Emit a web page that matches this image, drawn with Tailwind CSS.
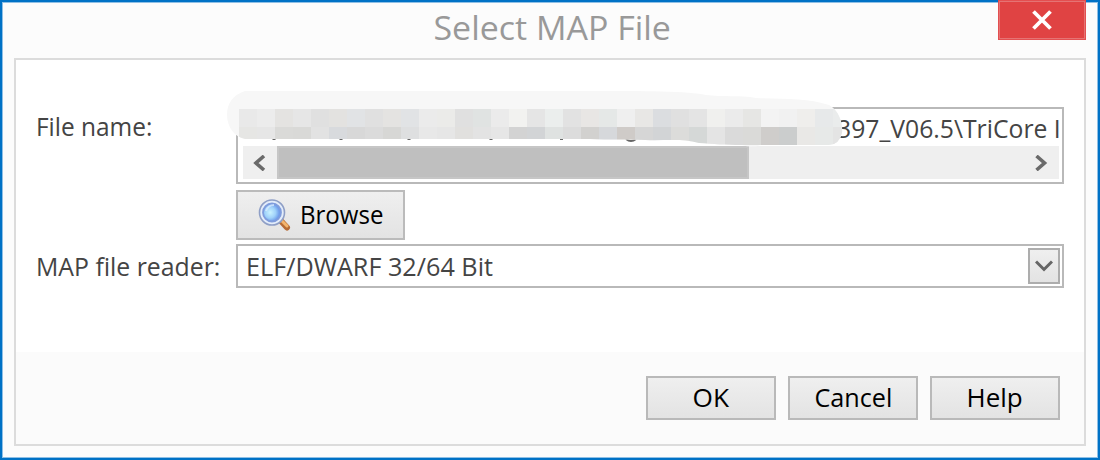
<!DOCTYPE html>
<html lang="en">
<head>
<meta charset="utf-8">
<title>Select MAP File</title>
<script src="https://cdn.jsdelivr.net/npm/@tailwindcss/browser@4"></script>
</head>
<body class="w-[1100px] h-[460px] overflow-hidden bg-[#fcfcfc] font-['Open_Sans','Noto_Sans',sans-serif] text-[25.5px] text-[#444]">
<div class="relative w-full h-full border-2 border-[#0072c6] shadow-[inset_0_0_0_1px_#8fc0e6] px-3 flex flex-col">
  <header class="h-14 pl-1 flex justify-center items-start text-[33.5px] leading-[50px] text-[#999]">
    <span class="fit inline-block whitespace-nowrap origin-center" data-w="237">Select MAP File</span>
  </header>
  <button aria-label="Close" class="absolute -top-0.5 left-[996px] w-[88px] h-10 bg-[#e04343] border border-[#e34f50] shadow-[inset_0_0_0_1px_#e57373] flex items-center justify-center">
    <svg width="20" height="20" viewBox="0 0 20 20" fill="none" stroke="#fff" stroke-width="3.8"><path d="M1.500 1.500 18.500 18.500M18.500 1.500 1.500 18.500"/></svg>
  </button>
  <main class="h-[388px] w-[1072px] border-2 border-[#dcdcdc] bg-white flex flex-col">
    <section class="h-[292px] pt-[47px] pl-5 flex flex-col">
      <div class="flex h-[77px]">
        <label class="w-[200px] leading-[39px]"><span class="fit inline-block whitespace-nowrap origin-left" data-w="116">File name:</span></label>
        <div class="relative w-[828px] border-2 border-[#b9b9b9] bg-white px-[5px] flex flex-col">
          <div class="h-[37px] w-[816px] overflow-hidden pl-[594px] leading-[39px]">
            <span class="fit inline-block whitespace-nowrap origin-left" data-w="224">397_V06.5\TriCore I</span>
          </div>
          <div class="w-[816px] h-[33px] bg-[#efefef] flex items-center">
            <div class="w-[34px] flex justify-center"><svg width="14" height="16" viewBox="0 0 14 16" fill="none" stroke="#6a6a6a" stroke-width="3.6"><path d="M11 1 3 8l8 7"/></svg></div>
            <div class="w-[472px] h-[33px] bg-[#bfbfbf] border-2 border-[#c6c6c6]"></div>
            <div class="grow flex justify-end pr-[11px]"><svg width="14" height="16" viewBox="0 0 14 16" fill="none" stroke="#6a6a6a" stroke-width="3.6"><path d="M2.5 1l8 7-8 7"/></svg></div>
          </div>
          <svg class="absolute -left-[11px] -top-[18px]" width="618" height="60" viewBox="227 91 618 60">
            <defs><clipPath id="blob"><path d="M245 91H595C640 91 690 91 706 95C722 97 740 95 756 98C785 99 808 98 829 105C840 111 843 125 842 133Q839 145 829 145H761Q752 148 742 145C725 145 713 144 699 143C681 138 665 141 645 140C622 139 610 140 590 139H245C234 137 227 126 227 115Q227 97 245 91Z"/></clipPath></defs>
            <path d="M272.500 139h3M339.500 139h3M407.500 139h3M489.500 139h3M560 139h3" stroke="#666" stroke-width="1.800"/>
            <path d="M626 139q5 4 10 0" stroke="#666" stroke-width="2" fill="none"/>
            <g clip-path="url(#blob)"><rect x="227" y="91" width="618" height="60" fill="#f7f7f7"/><g id="cells" shape-rendering="crispEdges"></g></g>
          </svg>
        </div>
      </div>
      <button class="mt-1.5 ml-[200px] w-[169px] h-[50px] border-2 border-[#bbb] bg-linear-to-b from-[#efefef] to-[#e3e3e3] text-black flex items-center pl-5">
        <svg class="shrink-0" width="33" height="34" viewBox="0 0 33 34">
          <defs><radialGradient id="lens" cx=".4" cy=".5"><stop offset="0" stop-color="#c9f2ff"/><stop offset=".6" stop-color="#a0d2fa"/><stop offset="1" stop-color="#719eea"/></radialGradient></defs>
          <path d="M23 23 29 29.500" stroke="#b66b35" stroke-width="6" stroke-linecap="round"/>
          <path d="M23 22 29 28" stroke="#f3b46c" stroke-width="3" stroke-linecap="round"/>
          <circle cx="14" cy="14.500" r="12.500" fill="#e4edfa" stroke="#8f9fc6" stroke-width="1.600"/>
          <circle cx="14" cy="14.500" r="9" fill="url(#lens)" stroke="#7f9cdc" stroke-width="1.800"/>
          <path d="M8 13q2-6 8-6" stroke="#dff0ff" stroke-width="2" fill="none" opacity=".7"/>
        </svg>
        <span class="fit ml-[9px] pb-0.5 inline-block whitespace-nowrap origin-left" data-w="83">Browse</span>
      </button>
      <div class="mt-1 flex h-11">
        <label class="w-[200px] leading-[44px]"><span class="fit inline-block whitespace-nowrap origin-left" data-w="184">MAP file reader:</span></label>
        <div class="w-[828px] border-2 border-[#b9b9b9] bg-white pl-2 pr-0.5 flex items-center justify-between">
          <span class="fit inline-block whitespace-nowrap origin-left" data-w="247">ELF/DWARF 32/64 Bit</span>
          <div class="w-8 h-9 border-2 border-[#adadad] bg-linear-to-b from-[#efefef] to-[#e3e3e3] flex items-center justify-center">
            <svg width="18" height="12" viewBox="0 0 18 12" fill="none" stroke="#666" stroke-width="3"><path d="M1 1.500 9 9.500l8-8"/></svg>
          </div>
        </div>
      </div>
    </section>
    <footer class="grow bg-[#fbfbfb] pt-6 pr-6 flex justify-end items-start gap-3 text-black">
      <button class="w-[130px] h-11 border-2 border-[#b9b9b9] bg-linear-to-b from-[#efefef] to-[#e3e3e3] flex items-center justify-center"><span class="fit pb-0.5 inline-block origin-center" data-w="36">OK</span></button>
      <button class="w-[130px] h-11 border-2 border-[#b9b9b9] bg-linear-to-b from-[#efefef] to-[#e3e3e3] flex items-center justify-center"><span class="fit pb-0.5 inline-block origin-center" data-w="78">Cancel</span></button>
      <button class="w-[130px] h-11 border-2 border-[#b9b9b9] bg-linear-to-b from-[#efefef] to-[#e3e3e3] flex items-center justify-center"><span class="fit pb-0.5 inline-block origin-center" data-w="56">Help</span></button>
    </footer>
  </main>
</div>
<script>
  // Condense each caption to its design width, again whenever its own size changes
  const fit = e => { e.style.transform = 'scaleX(' + e.dataset.w / e.offsetWidth + ')'; };
  const watcher = new ResizeObserver(list => list.forEach(x => fit(x.target)));
  document.querySelectorAll('.fit').forEach(e => watcher.observe(e));
  addEventListener('load', () => document.querySelectorAll('.fit').forEach(fit));
  // Mosaic covering the private part of the path, one 18px cell per colour
  const rows = [
    'e9e9e9 ececec e4e3e1 e6e6e6 e0e0e0 e3e2e0 e1e3e5 e0e0e0 e4e3e1 e1e3e5 ebebeb ebebe9 e0e0e0 e0e3e2 ebebeb f2f2f0 e5e5e5 ebeeed e2e2e2 e8e6e4 e5e8e7 efefef e8e7e5 dbdde0 e0e0e0 e4e4e4 f0f0ee ebebeb e6e6e4 f3f3f3 f1f1f1 efeeec e7e9ea eaecec',
    'e6e6e4 e6e6e6 dadad8 d9d9d7 e2e2e2 d8dadd d8d8d8 dbdbdb d7d7d5 dedfe0 e8e8e8 e6e6e6 e1e0de e3e3e3 e6e6e6 d3d3d3 d2d4d6 dfe2e1 dcdcdc d2d1cf d6d8db cfcbc8 d6d6d6 d2d4d6 dcdcda d5d8d7 e4e4e4 dadada dadad8 cfcdcb cbcdcd e9e8e6 e7e9e8 e4e4e4'
  ];
  rows.forEach((r, j) => r.split(' ').forEach((c, i) => {
    const b = document.createElementNS('http://www.w3.org/2000/svg', 'rect');
    b.setAttribute('x', 239 + i * 18); b.setAttribute('y', 109 + j * 18);
    b.setAttribute('width', 18); b.setAttribute('height', 18); b.setAttribute('fill', '#' + c);
    document.getElementById('cells').appendChild(b);
  }));
</script>
</body>
</html>
